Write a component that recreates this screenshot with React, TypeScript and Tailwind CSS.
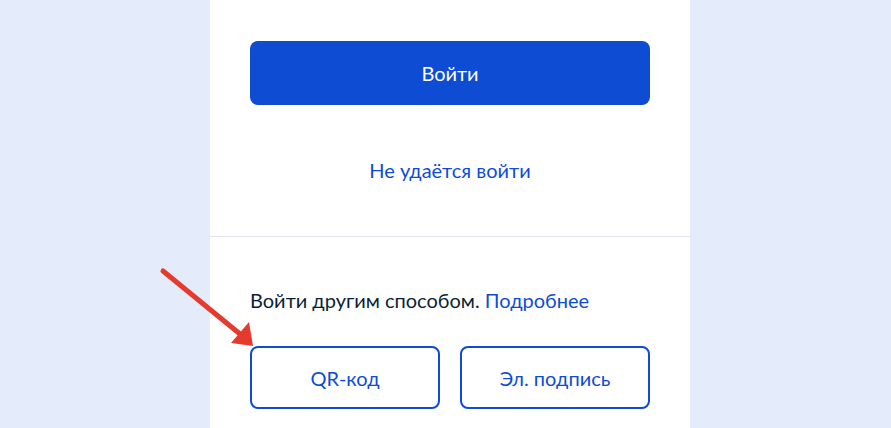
import React from 'react';

export default function App() {
  return (
    <div className="relative flex h-[428px] w-full justify-center overflow-hidden bg-[#e4ebfa] pl-[9px] font-['Lato','Liberation_Sans',sans-serif]">
      <div className="flex h-full w-[480px] flex-col bg-white">
        {/* Main login block */}
        <div className="flex flex-col items-center border-b border-[#e1e4e8] px-10 pt-[41px] pb-[52px]">
          <button className="flex h-16 w-full items-center justify-center rounded-lg bg-[#0d4cd3] text-[20px] text-white">
            Войти
          </button>
          <a className="mt-[51px] text-[20px] leading-7 text-[#0d4cd3]">Не удаётся войти</a>
        </div>

        {/* Other methods */}
        <div className="flex flex-col px-10 pt-[49px]">
          <p className="text-[20px] leading-7 text-[#0b1f33]">
            Войти другим способом. <span className="text-[#0d4cd3]">Подробнее</span>
          </p>
          <div className="mt-[32px] flex gap-5">
            <button className="flex h-[63px] flex-1 items-center justify-center rounded-lg border-2 border-[#0d4cd3] text-[20px] text-[#0d4cd3]">
              QR-код
            </button>
            <button className="flex h-[63px] flex-1 items-center justify-center rounded-lg border-2 border-[#0d4cd3] text-[20px] text-[#0d4cd3]">
              Эл. подпись
            </button>
          </div>
        </div>
      </div>

      {/* annotation arrow */}
      <svg className="pointer-events-none absolute left-0 top-0" width="891" height="428" viewBox="0 0 891 428">
        <line x1="163" y1="271" x2="240" y2="334" stroke="#e53b2f" strokeWidth="5" strokeLinecap="round" />
        <polygon points="253,346 249,322 231,343" fill="#e53b2f" />
      </svg>
    </div>
  );
}
